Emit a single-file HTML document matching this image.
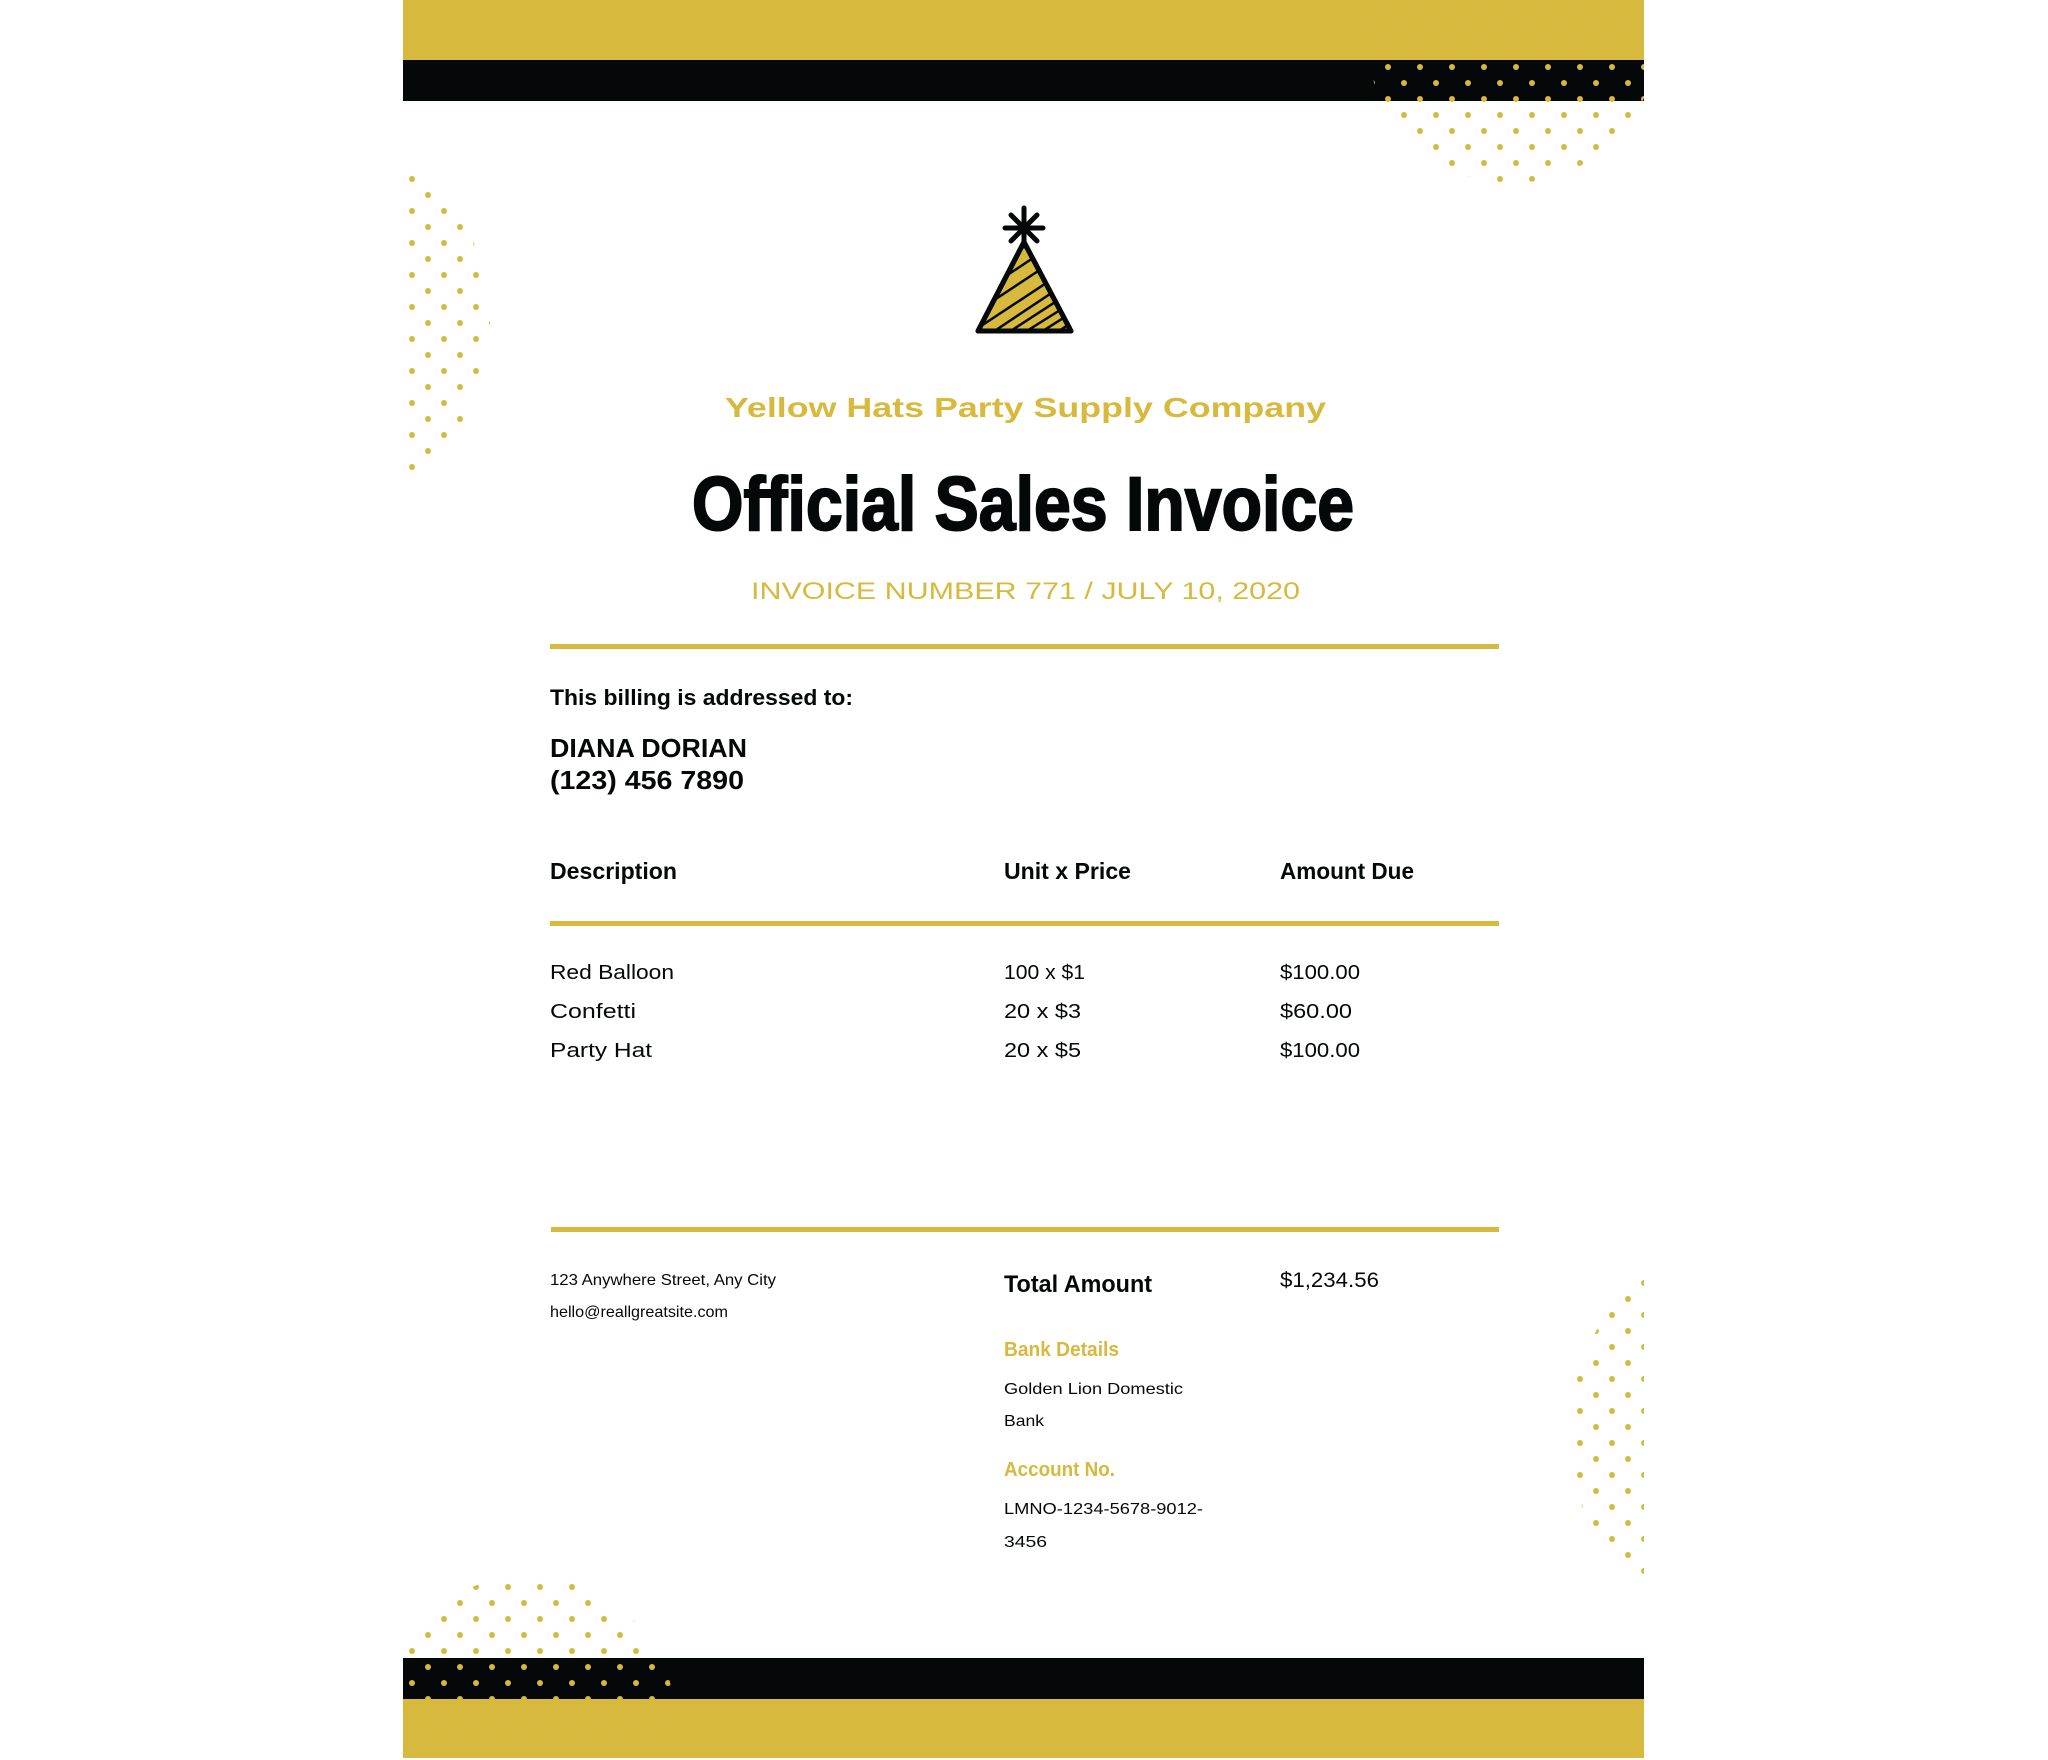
<!DOCTYPE html>
<html><head><meta charset="utf-8"><style>
html,body{margin:0;padding:0;background:#fff;}
body{width:2048px;height:1760px;overflow:hidden;}
svg{display:block;}
text{font-family:"Liberation Sans",sans-serif;}
</style></head><body>
<svg width="2048" height="1760" viewBox="0 0 2048 1760" xmlns="http://www.w3.org/2000/svg">
<defs>
<pattern id="dots" x="0" y="0" width="32" height="32" patternUnits="userSpaceOnUse">
<circle cx="12" cy="3" r="3" fill="#d6b940"/>
<circle cx="28" cy="19" r="3" fill="#d6b940"/>
</pattern>
<clipPath id="pg"><rect x="403" y="0" width="1241" height="1758"/></clipPath>
</defs>
<rect width="2048" height="1760" fill="#fff"/>
<rect x="403" y="0" width="1241" height="60" fill="#d7b93e"/>
<rect x="403" y="60" width="1241" height="41" fill="#050808"/>
<rect x="403" y="1658" width="1241" height="41" fill="#050808"/>
<rect x="403" y="1699" width="1241" height="59" fill="#d7b93e"/>
<g clip-path="url(#pg)">
<circle cx="1512" cy="38" r="145" fill="url(#dots)"/>
<circle cx="290" cy="322" r="200" fill="url(#dots)"/>
<circle cx="1757" cy="1432" r="190" fill="url(#dots)"/>
<circle cx="528" cy="1724" r="148" fill="url(#dots)"/>
</g>
<!-- hat -->
<g stroke="#050808" stroke-width="5" stroke-linecap="round" stroke-linejoin="round">
<clipPath id="hatc"><polygon points="1024,242 978,331 1071,331"/></clipPath>
<polygon points="1024,242 978,331 1071,331" fill="#d7b93e"/>
<g clip-path="url(#hatc)" stroke-width="2.5">
<line x1="970" y1="300" x2="1060" y2="240"/>
<line x1="970" y1="316" x2="1070" y2="250"/>
<line x1="975" y1="330" x2="1075" y2="264"/>
<line x1="990" y1="334" x2="1080" y2="274"/>
<line x1="1006" y1="334" x2="1086" y2="282"/>
<line x1="1022" y1="334" x2="1092" y2="290"/>
<line x1="1038" y1="334" x2="1098" y2="296"/>
<line x1="1054" y1="334" x2="1104" y2="302"/>
<line x1="960" y1="286" x2="1050" y2="226"/>
</g>
<polygon points="1024,242 978,331 1071,331" fill="none"/>
<line x1="1024" y1="208" x2="1024" y2="246"/>
<line x1="1005" y1="228" x2="1043" y2="228"/>
<line x1="1011" y1="215" x2="1037" y2="241"/>
<line x1="1037" y1="215" x2="1011" y2="241"/>
</g>
<circle cx="1024" cy="228" r="6" fill="#050808"/>
<!-- header text -->
<text x="725" y="417" font-size="28" font-weight="bold" fill="#d7b93e" textLength="601" lengthAdjust="spacingAndGlyphs">Yellow Hats Party Supply Company</text>
<text x="692" y="530" font-size="76" font-weight="bold" fill="#050808" textLength="662" lengthAdjust="spacingAndGlyphs" stroke="#050808" stroke-width="2">Official Sales Invoice</text>
<text x="751" y="599" font-size="24" fill="#d7b93e" textLength="549" lengthAdjust="spacingAndGlyphs">INVOICE NUMBER 771 / JULY 10, 2020</text>
<rect x="550" y="644" width="949" height="5" fill="#d7b93e"/>
<text x="550" y="705" font-size="22" font-weight="bold" fill="#050808" textLength="303" lengthAdjust="spacingAndGlyphs">This billing is addressed to:</text>
<text x="550" y="757" font-size="26" font-weight="bold" fill="#050808" textLength="197" lengthAdjust="spacingAndGlyphs">DIANA DORIAN</text>
<text x="550" y="789" font-size="26" font-weight="bold" fill="#050808" textLength="194" lengthAdjust="spacingAndGlyphs">(123) 456 7890</text>
<text x="550" y="879" font-size="23" font-weight="bold" fill="#050808" textLength="127" lengthAdjust="spacingAndGlyphs">Description</text>
<text x="1004" y="879" font-size="23" font-weight="bold" fill="#050808" textLength="127" lengthAdjust="spacingAndGlyphs">Unit x Price</text>
<text x="1280" y="879" font-size="23" font-weight="bold" fill="#050808" textLength="134" lengthAdjust="spacingAndGlyphs">Amount Due</text>
<rect x="550" y="921" width="949" height="5" fill="#d7b93e"/>
<g font-size="20" fill="#050808">
<text x="550" y="979" textLength="124" lengthAdjust="spacingAndGlyphs">Red Balloon</text>
<text x="1004" y="979" textLength="81" lengthAdjust="spacingAndGlyphs">100 x $1</text>
<text x="1280" y="979" textLength="80" lengthAdjust="spacingAndGlyphs">$100.00</text>
<text x="550" y="1018" textLength="86" lengthAdjust="spacingAndGlyphs">Confetti</text>
<text x="1004" y="1018" textLength="77" lengthAdjust="spacingAndGlyphs">20 x $3</text>
<text x="1280" y="1018" textLength="72" lengthAdjust="spacingAndGlyphs">$60.00</text>
<text x="550" y="1057" textLength="102" lengthAdjust="spacingAndGlyphs">Party Hat</text>
<text x="1004" y="1057" textLength="77" lengthAdjust="spacingAndGlyphs">20 x $5</text>
<text x="1280" y="1057" textLength="80" lengthAdjust="spacingAndGlyphs">$100.00</text>
</g>
<rect x="551" y="1227" width="948" height="5" fill="#d7b93e"/>
<g fill="#050808">
<text x="550" y="1285" font-size="16" textLength="226" lengthAdjust="spacingAndGlyphs">123 Anywhere Street, Any City</text>
<text x="550" y="1317" font-size="16" textLength="178" lengthAdjust="spacingAndGlyphs">hello@reallgreatsite.com</text>
<text x="1004" y="1292" font-size="24" font-weight="bold" textLength="148" lengthAdjust="spacingAndGlyphs">Total Amount</text>
<text x="1280" y="1287" font-size="21" textLength="99" lengthAdjust="spacingAndGlyphs">$1,234.56</text>
<text x="1004" y="1356" font-size="20" font-weight="bold" fill="#d7b93e" textLength="115" lengthAdjust="spacingAndGlyphs">Bank Details</text>
<text x="1004" y="1394" font-size="16" textLength="179" lengthAdjust="spacingAndGlyphs">Golden Lion Domestic</text>
<text x="1004" y="1426" font-size="16" textLength="40" lengthAdjust="spacingAndGlyphs">Bank</text>
<text x="1004" y="1476" font-size="20" font-weight="bold" fill="#d7b93e" textLength="111" lengthAdjust="spacingAndGlyphs">Account No.</text>
<text x="1004" y="1514" font-size="16" textLength="199" lengthAdjust="spacingAndGlyphs">LMNO-1234-5678-9012-</text>
<text x="1004" y="1547" font-size="16" textLength="43" lengthAdjust="spacingAndGlyphs">3456</text>
</g>
</svg>
</body></html>
